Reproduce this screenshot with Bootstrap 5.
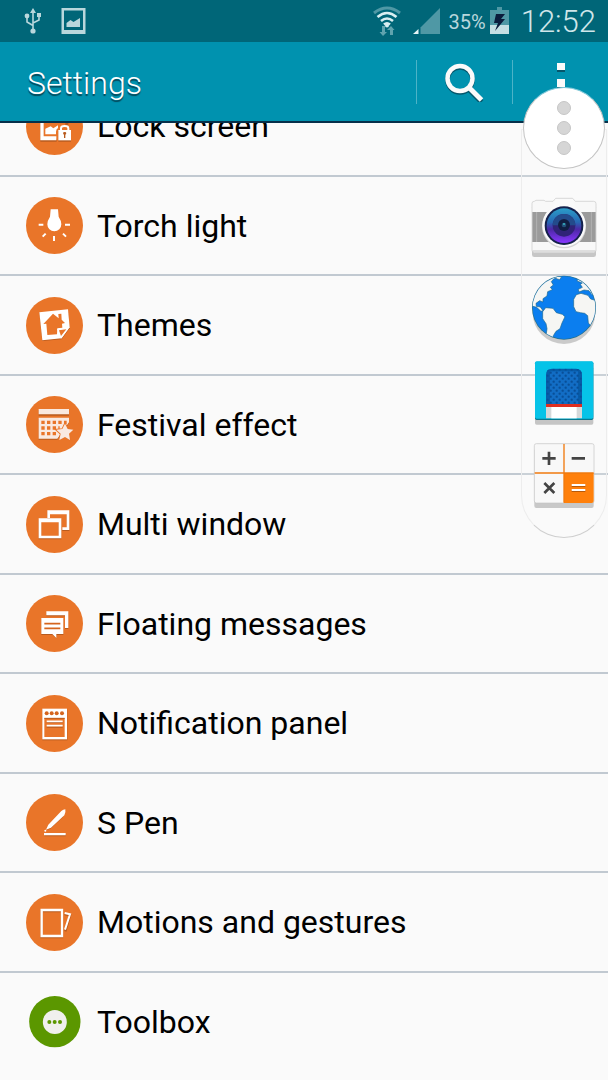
<!DOCTYPE html>
<html lang="en">
<head>
<meta charset="utf-8">
<meta name="viewport" content="width=device-width, initial-scale=1">
<title>Settings</title>
<link href="https://cdn.jsdelivr.net/npm/bootstrap@5.3.0/dist/css/bootstrap.min.css" rel="stylesheet">
<style>
  body { background: #fafafa; color: #000; font-family: Roboto, "Noto Sans", sans-serif; overflow: hidden; min-height: 100vh; }
  svg { display: block; flex: none; }
  .status-bar { height: 42px; background: #006678; color: #b9d7dc; padding: 0 12px 0 24px; }
  .status-percent { font-size: 20px; line-height: 24px; padding-top: 2px; }
  .status-clock { font-size: 31px; line-height: 36px; font-weight: 300; padding-top: 2px; color: #d0e6ea; }
  .status-gap { margin-left: 12px; }
  .app-bar { height: 81px; background: #0092af; border-bottom: 2px solid #06304a; padding-left: 27px; }
  .app-title { font-size: 32px; line-height: 40px; font-weight: 300; padding-top: 2px; color: #fff; text-shadow: 0 2px 1px #04485a; }
  .bar-btn { width: 96px; height: 44px; padding: 0; border: 0; border-left: 1px solid #4db3c7; border-radius: 0; display: flex; align-items: center; justify-content: center; }
  /* The list is scrolled part of the way under the app bar. */
  .settings-list { margin-top: -46px; }
  .settings-row { height: 100px; padding: 0 26px; gap: 14px; border-bottom: 2px solid #c1c9d1; color: #000; font-size: 32px; line-height: 40px; }
  .settings-row:hover { color: #000; }
  .settings-row:nth-child(even) { height: 99px; }
  .settings-row:last-child { border-bottom-color: transparent; }
  .toolbox { top: 87px; right: 1px; width: 86px; padding-bottom: 29px; gap: 16px; z-index: 5; }
  .toolbox::before { content: ""; position: absolute; inset: 42px 0 0; z-index: -1; border: 1px solid #dcdcdc; border-color: #f0f0f0 #ededed #cfcfcf; border-radius: 0 0 43px 43px; background: rgba(252,252,252,.15); }
  .toolbox-handle { width: 82px; height: 82px; margin-bottom: 12px; padding: 0; gap: 6px; background: #fff; border: 1px solid #c4c4c4; border-top-color: #7fc7d8; border-radius: 50%; }
  .handle-dot { width: 14px; height: 14px; border-radius: 50%; background: #d6d6d6; border: 1px solid #c6c6c6; }
</style>
</head>
<body>
<header class="position-relative z-2">
  <div class="status-bar d-flex align-items-center">
    <svg width="18" height="26" viewBox="0 0 18 26" fill="none" stroke="#b9d7dc" stroke-width="1.6" role="img" aria-label="USB">
      <path d="M9 3v19M9 17.500L3 14V8M9 15l6-3V7"/>
      <path d="M9 0l3 5H6z" fill="#b9d7dc" stroke="none"/><circle cx="3" cy="8" r="2.400" fill="#b9d7dc" stroke="none"/><path d="M13 5h4v4h-4z" fill="#b9d7dc" stroke="none"/><circle cx="9" cy="23" r="2.600" fill="#b9d7dc" stroke="none"/>
    </svg>
    <svg class="ms-3 me-auto" width="32" height="26" viewBox="0 0 32 26" role="img" aria-label="Screenshot saved">
      <path fill="#b9d7dc" fill-rule="evenodd" d="M3.500 0h24v26h-24zM6 2.500v19.500h19V2.500zM8.500 19v-4l4-3 3 2 6.500-4v9z"/>
    </svg>
    <svg width="28" height="30" viewBox="0 0 28 30" fill="none" role="img" aria-label="Wi-Fi">
      <path d="M1 7Q14-3 27 7" stroke="#4f98a5" stroke-width="3"/>
      <path d="M4.500 11Q14 3 23.500 11M8 15q6-5 12 0M11 18.500q3-2.500 6 0" stroke="#d9eef1" stroke-width="2.600"/><circle cx="14" cy="19.500" r="2" fill="#d9eef1"/>
      <path d="M9 20h3v6h2l-4 4-3.500-4H9zM17 29v-5h-3l4-4 3.500 4H20v5z" fill="#5fa3ae"/>
    </svg>
    <svg class="status-gap" width="28" height="28" viewBox="0 0 28 28" role="img" aria-label="Signal">
      <path d="M27 1v26H7.500v-6.500z" fill="#4f98a5"/><path d="M5.500 22v5H0z" fill="#e6f4f6"/>
    </svg>
    <span class="status-percent ms-2 me-1">35%</span>
    <svg width="19" height="28" viewBox="0 0 19 28" role="img" aria-label="Battery charging">
      <path d="M0 3h7V0h5v3h7v24H0z" fill="#4f98a5"/><path d="M0 18h19v9H0z" fill="#c5dfe3"/><path d="M6 7h9l-4 5h4L5 24l3-8H4z" fill="#0b1c3c"/>
    </svg>
    <time class="status-clock status-gap">12:52</time>
  </div>
  <nav class="app-bar d-flex align-items-center" aria-label="Settings">
    <h1 class="app-title mb-0 me-auto">Settings</h1>
    <button class="btn bar-btn" type="button" aria-label="Search">
      <svg width="40" height="40" viewBox="0 0 40 40" fill="none" stroke-width="4.500">
        <g stroke="#05566b"><circle cx="15" cy="18" r="12.500"/><path d="M24 27.500L36.500 40" stroke-width="5"/></g>
        <g stroke="#fafafa"><circle cx="15" cy="16.500" r="12.500"/><path d="M24 25.500L36.500 38" stroke-width="5"/></g>
      </svg>
    </button>
    <button class="btn bar-btn" type="button" aria-label="More options">
      <svg width="10" height="42" viewBox="0 0 10 42"><path d="M1 4h8v7H1zM1 20h8v8H1zM1 36h8v6H1z" fill="#05566b"/><path d="M1 2h8v7H1zM1 18h8v8H1zM1 34h8v6H1z" fill="#fafafa"/></svg>
    </button>
  </nav>
</header>

<main class="settings-list d-flex flex-column">
  <a class="settings-row d-flex align-items-center text-decoration-none" href="#lock">
    <svg width="57" height="57" viewBox="80 292 171 171"><circle cx="165.500" cy="377.500" r="85.500" fill="#e97529"/><path fill="#b85b1f" transform="translate(0 3)" d="M123 345h84v25h-9v-16h-66v57h40v9h-49zM177 388h38v32h-38z"/><path fill="#fff" d="M123 343h84v24h-9v-15h-65v55h38v12h-48zM138 401v-17l16-7 8 6 14-9v8q-6 4-6 11v8z"/><path d="M185 389v-6q0-7 11-7t11 7v6" fill="none" stroke="#fff" stroke-width="6"/><path fill="#fff" d="M177 388h38v31h-38z"/><path fill="#b85b1f" d="M191 398q0-4 5-4t5 4l-3 5v9h-4v-9z"/></svg>
    <span>Lock screen</span>
  </a>
  <a class="settings-row d-flex align-items-center text-decoration-none" href="#torch">
    <svg width="57" height="57" viewBox="80 51 171 171"><circle cx="165.500" cy="136.500" r="85.500" fill="#e97529"/><path fill="#fff" d="M154 88h22l2 22q8 12 8 23a21 21 0 0 1-42 0q0-11 8-23z"/><path d="M118 134h14M197 134h15M139 161l-9 9M191 161l9 9M164 168v15" stroke="#fff" stroke-width="6"/></svg>
    <span>Torch light</span>
  </a>
  <a class="settings-row d-flex align-items-center text-decoration-none" href="#themes">
    <svg width="57" height="57" viewBox="80 350 171 171"><circle cx="165.500" cy="435.500" r="85.500" fill="#e97529"/><path fill="#b85b1f" d="M120 398l86-9 5 55-24 33-58 5z"/><path fill="#fff" d="M120 396l86-9 5 54-24 33-58 6z"/><path fill="#e97529" d="M132 431l29-31 17 14-1-13 9-1 1 18 10 10-9 2 1 12-15 2-1 18-29 2-3-34z"/><path fill="#fff" d="M173 446l36-4-24 33z"/><path fill="#e97529" d="M179 450l22-3-16 20z"/></svg>
    <span>Themes</span>
  </a>
  <a class="settings-row d-flex align-items-center text-decoration-none" href="#festival">
    <svg width="57" height="57" viewBox="80 48 171 171"><circle cx="165.500" cy="133.500" r="85.500" fill="#e97529"/><path fill="#b85b1f" d="M118 90h91v17h-91zM118 116h91v14l-35 49h-56z"/><path fill="#f9e9e0" d="M118 87h91v16h-91zM118 113h91v14l-35 49h-56z"/><path d="M126 127h76M126 144h55M126 161h46" stroke="#e97529" stroke-width="10" stroke-dasharray="10 7"/><path d="M197 130l8 17 18 2-13 13 3 19-16-9-17 9 4-19-14-13 19-2z" fill="#b85b1f" stroke="#e97529" stroke-width="5"/><path d="M197 131l8 16 17 2-13 12 3 19-15-9-17 9 4-19-13-12 18-2z" fill="#f9e9e0"/></svg>
    <span>Festival effect</span>
  </a>
  <a class="settings-row d-flex align-items-center text-decoration-none" href="#multi">
    <svg width="57" height="57" viewBox="80 347 171 171"><circle cx="165.500" cy="432.500" r="85.500" fill="#e97529"/><g fill="none" stroke-width="8"><path stroke="#b85b1f" d="M148 416v-19h58v51h-17M122 421h60v52h-60z"/><path stroke="#fff" d="M148 413v-19h58v51h-17M122 418h60v52h-60z"/><path stroke="#fff" stroke-width="4" d="M120 424h64M146 400h62"/></g></svg>
    <span>Multi window</span>
  </a>
  <a class="settings-row d-flex align-items-center text-decoration-none" href="#floating">
    <svg width="57" height="57" viewBox="80 45 171 171"><circle cx="165.500" cy="130.500" r="85.500" fill="#e97529"/><path fill="#b85b1f" d="M141 97h66v50h-10v-38h-56zM126 117h66v48h-21v10l-11-10h-34z"/><path fill="#fff" d="M141 94h66v50h-10v-38h-56zM126 114h66v48h-21v12l-12-12h-33z"/><path d="M135 131h48M135 145h48" stroke="#d5651e" stroke-width="5"/></svg>
    <span>Floating messages</span>
  </a>
  <a class="settings-row d-flex align-items-center text-decoration-none" href="#notification">
    <svg width="57" height="57" viewBox="80 344 171 171"><circle cx="165.500" cy="429.500" r="85.500" fill="#e97529"/><path fill="#b85b1f" d="M129 388h75v92h-75z"/><path fill="#fff" d="M129 385h74v92h-74z"/><path fill="#e97529" d="M135 413h61v57h-61z"/><path d="M135 414h61" stroke="#b85b1f" stroke-width="3"/><g fill="#d5651e"><circle cx="142" cy="399" r="6"/><circle cx="157" cy="399" r="6"/><circle cx="172" cy="399" r="6"/><circle cx="188" cy="399" r="6"/></g><path d="M142 426h48M142 440h48" stroke="#b85b1f" stroke-width="4"/><path d="M142 423h48M142 436h48" stroke="#fff" stroke-width="5"/></svg>
    <span>Notification panel</span>
  </a>
  <a class="settings-row d-flex align-items-center text-decoration-none" href="#spen">
    <svg width="57" height="57" viewBox="80 42 171 171"><circle cx="165.500" cy="127.500" r="85.500" fill="#e97529"/><path fill="#b85b1f" d="M135 163h64v6h-64zM141 150l12-4 38-35 7-20z"/><path fill="#fff" d="M134 159h65v7h-65zM140 149l7-15 39-41q6-5 12-5 2 10-3 18l-40 37z"/><circle cx="138" cy="152" r="3" fill="#fff"/></svg>
    <span>S Pen</span>
  </a>
  <a class="settings-row d-flex align-items-center text-decoration-none" href="#motions">
    <svg width="57" height="57" viewBox="80 341 171 171"><circle cx="165.500" cy="426.500" r="85.500" fill="#e97529"/><g fill="none" stroke-width="7"><path stroke="#b85b1f" d="M127 392h61v78h-61zM196 401l16 4-14 48"/><path stroke="#fff" d="M127 389h61v78h-61z"/><path stroke="#fff" stroke-width="6" d="M196 398l16 4-15 46"/></g></svg>
    <span>Motions and gestures</span>
  </a>
  <a class="settings-row d-flex align-items-center text-decoration-none" href="#toolbox">
    <svg width="57" height="57" viewBox="80 639 171 171"><circle cx="166.500" cy="725" r="77" fill="#5b9700"/><circle cx="166.500" cy="726" r="36" fill="#f0f0ed"/><g fill="#5b9700"><circle cx="150" cy="726" r="6"/><circle cx="166" cy="726" r="6"/><circle cx="182" cy="726" r="6"/></g></svg>
    <span>Toolbox</span>
  </a>
</main>

<aside class="toolbox position-absolute d-flex flex-column align-items-center" aria-label="Toolbox">
  <button class="toolbox-handle d-flex flex-column align-items-center justify-content-center" type="button" aria-label="Toggle toolbox">
    <span class="handle-dot"></span><span class="handle-dot"></span><span class="handle-dot"></span>
  </button>
  <a href="#camera" aria-label="Camera">
    <svg width="68" height="62" viewBox="60 111 204 186">
      <defs><linearGradient id="lens" x1="0" y1="0" x2="0" y2="1"><stop offset="0" stop-color="#2b9dc9"/><stop offset=".4" stop-color="#2768b4"/><stop offset=".6" stop-color="#4c28a5"/><stop offset="1" stop-color="#8737ff"/></linearGradient></defs>
      <rect x="66" y="135" width="192" height="156" rx="7" fill="#c6c6c6"/>
      <path d="M66 130q0-6 7-6l5-3h24l5 3h22l8-9h51l8 9h55q7 0 7 7v140q0 7-7 7H73q-7 0-7-7z" fill="#f8f8f8" stroke="#c9c9c9" stroke-width="2"/>
      <path d="M67 156h190v90H67z" fill="#9b9b9b"/><path d="M80 156v90M244 156v90" stroke="#b3b3b3" stroke-width="3"/>
      <path d="M68 273h188" stroke="#aaa" stroke-width="2"/>
      <circle cx="162" cy="199" r="66" fill="#d5d5d5"/><circle cx="162" cy="196" r="65" fill="#fafafa"/><path d="M126 150l11-33h51l11 33z" fill="#fafafa"/>
      <circle cx="162" cy="197" r="58" fill="#15214c"/><circle cx="162" cy="197" r="52" fill="url(#lens)"/><circle cx="162" cy="196" r="34" fill="#302377"/><path d="M128 196a34 34 0 0 1 68 0z" fill="#234b8b"/><circle cx="162" cy="195" r="18" fill="#101f43"/><circle cx="162" cy="195" r="7" fill="#22517a"/><circle cx="162" cy="192" r="3" fill="#39b6c4"/>
    </svg>
  </a>
  <a href="#browser" aria-label="Internet">
    <svg width="68" height="70" viewBox="60 345 204 210">
      <defs><clipPath id="globe"><circle cx="162" cy="443" r="94"/></clipPath></defs>
      <circle cx="162" cy="458" r="94" fill="#cacaca"/><circle cx="162" cy="443" r="96" fill="#26708b"/><circle cx="162" cy="443" r="94" fill="#0b7eef"/>
      <g clip-path="url(#globe)" fill="#f6f6f3" stroke="#1c688f" stroke-width="2">
        <path d="M60 340h84l-5 14-8 3-7 8 6 10-9 7 6 7-14 6-2 13-12 8 0 10-10-4-11 8 1 9 12 2 8 11-6 2-13-12-22-6z"/>
        <path d="M98 455l9-12 22 2 10 13 18 5 8 7-9 19-6 17-12 8-8 13-4 15-19-8 4-28-3-15-10-15z"/>
        <path d="M191 418l8-14 14-4 21 6 8 11 20 6v62l-16 17-11-13-2-22-9-7-13-2-13-3-7-15z"/>
        <path d="M204 356l20 12 20 18 12 20-10-2-9-12-15-2-15 6-2-8 12-6-6-9 6-4-16-6z"/><path d="M137 349l18 1-6 9-10-3z"/>
      </g>
    </svg>
  </a>
  <a href="#cover" aria-label="Cover">
    <svg width="68" height="66" viewBox="60 33 204 198">
      <defs><pattern id="dots" width="18" height="18" patternUnits="userSpaceOnUse"><circle cx="5" cy="5" r="3.500" fill="#084f99"/><circle cx="14" cy="14" r="3.500" fill="#084f99"/></pattern></defs>
      <rect x="75" y="50" width="175" height="174" rx="5" fill="#c5c5c5"/><rect x="75" y="35" width="175" height="175" rx="5" fill="#08788f"/><rect x="75" y="34" width="175" height="172" rx="5" fill="#06c3e8"/>
      <path d="M108 204V74q0-18 18-18h72q18 0 18 18v130z" fill="#075ca9"/><path d="M120 162V64h84v98z" fill="#126dc5"/><path d="M108 162V74q0-18 18-18h72q18 0 18 18v88z" fill="url(#dots)"/>
      <path d="M108 162h108v9H108z" fill="#df2e20"/><path d="M108 171h108v34H108z" fill="#d5d9da"/><path d="M124 171h76v34h-76z" fill="#fff"/>
    </svg>
  </a>
  <a href="#calculator" aria-label="Calculator">
    <svg width="68" height="66" viewBox="60 279 204 198">
      <rect x="73" y="296" width="178" height="178" rx="6" fill="#c8c8c8"/><rect x="73" y="281" width="179" height="178" rx="6" fill="#f8f8f8" stroke="#c4c4c4" stroke-width="2"/>
      <path d="M162 369h89v84q0 6-6 6h-83z" fill="#ff800b"/><path d="M74 369h177M162 282v176" stroke="#f07a0e" stroke-width="4"/>
      <path d="M97 325h40M117 305v40M185 325h40M103 399l30 30M133 399l-30 30" stroke="#444" stroke-width="8"/><path d="M185 407h41M185 422h41" stroke="#b75a0a" stroke-width="8"/><path d="M185 405h41M185 420h41" stroke="#fff" stroke-width="6"/>
    </svg>
  </a>
</aside>
<script src="https://cdn.jsdelivr.net/npm/bootstrap@5.3.0/dist/js/bootstrap.bundle.min.js"></script>
</body>
</html>
